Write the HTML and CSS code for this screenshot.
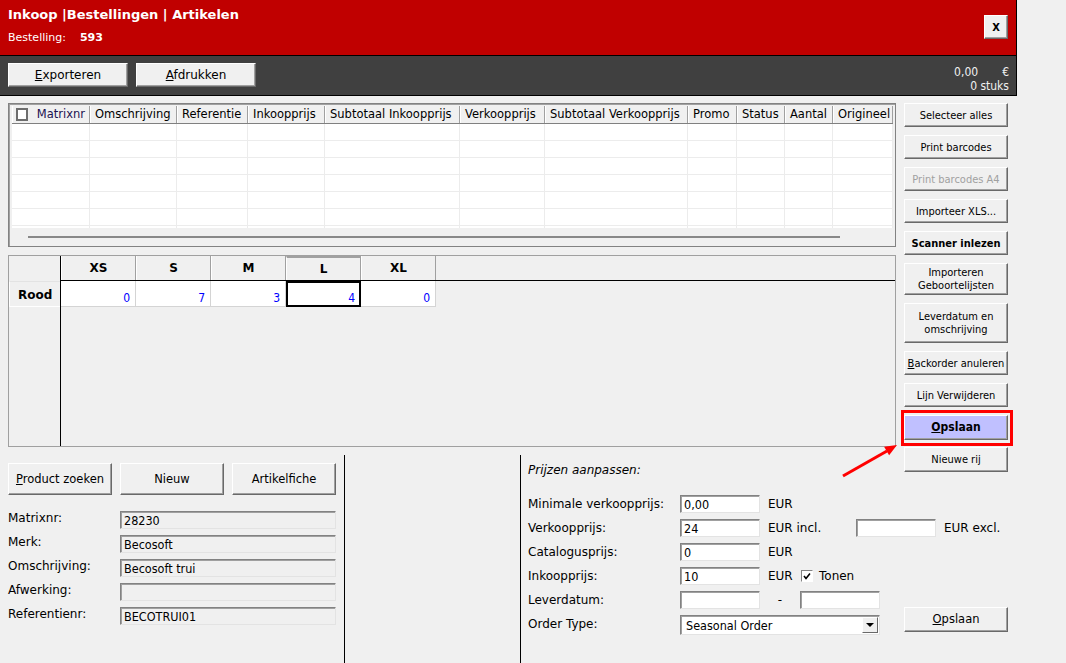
FILE: index.html
```html
<!DOCTYPE html>
<html lang="nl">
<head>
    <meta charset="UTF-8">
    <title>Inkoop | Bestellingen | Artikelen</title>
    <link rel="stylesheet" href="styles.css">
</head>
<body>
    <div class="top">
        <header class="titlebar">
            <div>
                <div class="title">Inkoop |Bestellingen | Artikelen</div>
                <div class="order">Bestelling:<b>593</b></div>
            </div>
            <button class="btn close">X</button>
        </header>
        <div class="toolbar">
            <button class="btn tb"><u>E</u>xporteren</button>
            <button class="btn tb"><u>A</u>fdrukken</button>
            <div class="totals">
                <div><span class="amount">0,00</span>€</div>
                <div>0 stuks</div>
            </div>
        </div>
    </div>

    <div class="content">
        <!-- article list -->
        <div class="grid">
            <div class="ghead">
                <div class="gc" style="width:78px"><span class="chk"></span>Matrixnr</div>
                <div class="gc" style="width:87px">Omschrijving</div>
                <div class="gc" style="width:71px">Referentie</div>
                <div class="gc" style="width:77px">Inkoopprijs</div>
                <div class="gc" style="width:135px">Subtotaal Inkoopprijs</div>
                <div class="gc" style="width:85px">Verkoopprijs</div>
                <div class="gc" style="width:143px">Subtotaal Verkoopprijs</div>
                <div class="gc" style="width:49px">Promo</div>
                <div class="gc" style="width:48px">Status</div>
                <div class="gc" style="width:48px">Aantal</div>
                <div class="gc" style="width:60px">Origineel</div>
            </div>
            <div class="gbody" id="gbody"></div>
            <div class="gscroll"><div class="bar"></div></div>
        </div>

        <div class="side">
            <button class="btn sb">Selecteer alles</button>
            <button class="btn sb">Print barcodes</button>
            <button class="btn sb disabled">Print barcodes A4</button>
            <button class="btn sb">Importeer XLS...</button>
            <button class="btn sb bold">Scanner inlezen</button>
            <button class="btn sb h32">Importeren<br>Geboortelijsten</button>
            <button class="btn sb h40">Leverdatum en<br>omschrijving</button>
            <button class="btn sb"><u>B</u>ackorder anuleren</button>
            <button class="btn sb">Lijn Verwijderen</button>
            <div class="highlight"><button class="btn sb save"><u>O</u>pslaan</button></div>
            <button class="btn sb h25">Nieuwe rij</button>
        </div>

        <!-- size matrix -->
        <div class="sizes">
            <div class="rowhead">
                <div class="corner"></div>
                <div class="rowlabel">Rood</div>
            </div>
            <div class="sbody">
                <div class="shead">
                    <div class="sh">XS</div>
                    <div class="sh">S</div>
                    <div class="sh">M</div>
                    <div class="sh cur">L</div>
                    <div class="sh">XL</div>
                </div>
                <div class="srow">
                    <div class="sc">0</div>
                    <div class="sc">7</div>
                    <div class="sc">3</div>
                    <div class="sc sel">4</div>
                    <div class="sc">0</div>
                </div>
            </div>
        </div>

        <div class="bottom">
            <div class="fields">
                <div class="btnrow">
                    <button class="btn big"><u>P</u>roduct zoeken</button>
                    <button class="btn big">Nieuw</button>
                    <button class="btn big">Artikelfiche</button>
                </div>
                <div class="flist">
                    <div class="frow"><label>Matrixnr:</label><div class="inp ro">28230</div></div>
                    <div class="frow"><label>Merk:</label><div class="inp ro">Becosoft</div></div>
                    <div class="frow"><label>Omschrijving:</label><div class="inp ro">Becosoft trui</div></div>
                    <div class="frow"><label>Afwerking:</label><div class="inp ro"></div></div>
                    <div class="frow"><label>Referentienr:</label><div class="inp ro">BECOTRUI01</div></div>
                </div>
            </div>
            <div class="vline"></div>
            <div class="vline far"></div>
            <div class="pricing">
                <div class="ptitle">Prijzen aanpassen:</div>
                <div class="plist">
                    <div class="prow"><label>Minimale verkoopprijs:</label><div class="inp">0,00</div><span class="unit">EUR</span></div>
                    <div class="prow"><label>Verkoopprijs:</label><div class="inp">24</div><span class="unit wide">EUR incl.</span><div class="inp"></div><span class="unit">EUR excl.</span></div>
                    <div class="prow"><label>Catalogusprijs:</label><div class="inp">0</div><span class="unit">EUR</span></div>
                    <div class="prow"><label>Inkoopprijs:</label><div class="inp">10</div><span class="unit narrow">EUR</span>
                        <span class="cb"><svg width="8" height="8" viewBox="0 0 8 8"><polyline points="1,4 3,6.5 7,1.5" fill="none" stroke="#000" stroke-width="1.6"/></svg></span><span class="cbl">Tonen</span></div>
                    <div class="pgroup">
                        <div class="plist">
                            <div class="prow"><label>Leverdatum:</label><div class="inp"></div><span class="dash">-</span><div class="inp"></div></div>
                            <div class="prow"><label>Order Type:</label>
                                <div class="select"><span>Seasonal Order</span><span class="dd"><i></i></span></div>
                            </div>
                        </div>
                        <button class="btn save2"><u>O</u>pslaan</button>
                    </div>
                </div>
            </div>
        </div>
    </div>

    <svg class="arrow" width="1066" height="663" viewBox="0 0 1066 663">
        <line x1="843" y1="476" x2="887" y2="451" stroke="#ff0000" stroke-width="3"/>
        <polygon points="897,445 889.1,455.3 884.1,446.7" fill="#ff0000"/>
    </svg>

    <script>
        // empty rows of the article list
        const widths = [78, 87, 71, 77, 135, 85, 143, 49, 48, 48, 60];
        const body = document.getElementById('gbody');
        for (let r = 0; r < 7; r++) {
            const row = document.createElement('div');
            row.className = 'grow';
            widths.forEach(function(w) {
                const cell = document.createElement('div');
                cell.className = 'gcell';
                cell.style.width = w + 'px';
                row.appendChild(cell);
            });
            body.appendChild(row);
        }
    </script>
</body>
</html>
```

FILE: styles.css
```css
* {
    box-sizing: border-box;
}

body {
    margin: 0;
    width: 1066px;
    height: 663px;
    overflow: hidden;
    position: relative;
    background: #f0f0f0;
    color: #000;
    font-family: "DejaVu Sans", sans-serif;
    font-size: 12px;
}

button {
    font-family: "DejaVu Sans Condensed", "DejaVu Sans", sans-serif;
    font-size: 11px;
    color: #000;
}

.btn {
    background: #f0f0f0;
    border: 1px solid;
    border-color: #fff #696969 #696969 #fff;
    box-shadow: inset -1px -1px 0 #a0a0a0;
    padding: 0;
    line-height: 13px;
}

/* header */
.top {
    width: 1017px;
    border-right: 1px solid #000;
}

.titlebar {
    height: 56px;
    background: #c00000;
    border-bottom: 1px solid #000;
    display: flex;
    justify-content: space-between;
    align-items: flex-start;
    padding: 6px 8px 0 8px;
    color: #fff;
}

.title {
    font-size: 13px;
    font-weight: bold;
    line-height: 18px;
}

.order {
    margin-top: 6px;
    font-size: 11px;
    line-height: 16px;
}

.order b {
    margin-left: 14px;
}

.close {
    width: 24px;
    height: 24px;
    margin-top: 9px;
    font-weight: bold;
}

.toolbar {
    height: 40px;
    background: #404040;
    border-bottom: 1px solid #000;
    display: flex;
    gap: 8px;
    padding: 7px 7px 0 8px;
}

.tb {
    width: 120px;
    height: 24px;
    font-family: "DejaVu Sans", sans-serif;
    font-size: 12px;
}

.totals {
    margin-left: auto;
    margin-top: 2px;
    text-align: right;
    color: #f0f0f0;
    font-family: "DejaVu Sans Condensed", sans-serif;
    font-size: 12px;
    line-height: 14px;
}

.amount {
    margin-right: 24px;
}

/* content */
.content {
    display: grid;
    grid-template-columns: 888px 104px;
    grid-template-rows: 144px 192px 208px;
    column-gap: 8px;
    row-gap: 8px;
    padding: 7px 0 0 8px;
}

.grid {
    border: 1px solid #828282;
    box-shadow: inset 1px 1px 0 #a0a0a0;
    padding: 2px 2px 0 3px;
    overflow: hidden;
}

.ghead {
    display: flex;
    height: 18px;
    border-bottom: 1px solid #808080;
    font-size: 11.5px;
}

.gc {
    flex: none;
    border-left: 1px solid #fff;
    border-right: 1px solid #a0a0a0;
    padding: 0 4px;
    line-height: 17px;
    white-space: nowrap;
    overflow: hidden;
    display: flex;
    align-items: center;
}

.gc:first-child {
    padding-left: 3px;
    color: #1c1250;
}

.chk {
    width: 13px;
    height: 13px;
    border: 2px solid #6d6d6d;
    background: #fff;
    margin-right: 9px;
}

.gbody {
    height: 104px;
    overflow: hidden;
    background: #fff;
    width: 881px;
}

.grow {
    display: flex;
    height: 17px;
    border-bottom: 1px solid #ececec;
}

.gcell {
    flex: none;
    height: 16px;
    border-right: 1px solid #ececec;
}

.gscroll {
    height: 17px;
    padding-top: 8px;
}

.bar {
    margin-left: 16px;
    width: 812px;
    height: 2px;
    background: #888;
}

/* side buttons */
.side {
    grid-column: 2;
    grid-row: 1 / 3;
    display: flex;
    flex-direction: column;
    gap: 8px;
    align-self: start;
    margin-right: -8px;
    padding-right: 8px;
}

.sb {
    height: 24px;
    width: 104px;
}

.sb.h25 { height: 25px; }
.sb.h32 { height: 32px; }
.sb.h40 { height: 40px; }

.sb.bold {
    font-weight: bold;
}

.sb.disabled {
    color: #a0a0a0;
}

.highlight {
    border: 3px solid #ff0000;
    margin: -5px -5px -7px -3px;
    padding: 2px 2px 3px 0;
}

.save {
    height: 25px;
    background: #c0c0ff;
    font-weight: bold;
    font-size: 12px;
}

/* size matrix */
.sizes {
    grid-column: 1;
    grid-row: 2;
    display: flex;
    border: 1px solid #a0a0a0;
}

.rowhead {
    width: 52px;
    border-right: 1px solid #000;
}

.corner {
    height: 25px;
}

.rowlabel {
    height: 26px;
    border-left: 1px solid #fff;
    border-bottom: 1px solid #fff;
    border-top: 1px solid #e3e3e3;
    font-weight: bold;
    font-size: 12px;
    line-height: 26px;
    padding-left: 8px;
}

.sbody {
    flex: 1;
}

.shead {
    display: flex;
    height: 25px;
    border-bottom: 1px solid #000;
}

.sh {
    width: 75px;
    border-left: 1px solid #fff;
    border-right: 1px solid #a0a0a0;
    text-align: center;
    font-weight: bold;
    font-size: 12px;
    line-height: 24px;
}

.sh.cur {
    border-top: 2px solid #a0a0a0;
    line-height: 22px;
}

.srow {
    display: flex;
}

.sc {
    width: 75px;
    height: 26px;
    background: #fff;
    border-right: 1px solid #d4d4d4;
    border-bottom: 1px solid #d4d4d4;
    color: #0000ff;
    text-align: right;
    font-family: "DejaVu Sans Condensed", sans-serif;
    font-size: 12px;
    padding: 10px 5px 0 0;
    line-height: 14px;
}

.sc.sel {
    border: 2px solid #000;
    padding: 8px 4px 0 0;
}

/* bottom part */
.bottom {
    grid-column: 1 / 3;
    grid-row: 3;
    display: flex;
}

.fields {
    width: 328px;
    padding-top: 8px;
}

.btnrow {
    display: flex;
    gap: 8px;
}

.big {
    width: 104px;
    height: 32px;
    font-family: "DejaVu Sans", sans-serif;
    font-size: 11.5px;
}

.flist {
    margin-top: 16px;
    display: flex;
    flex-direction: column;
    gap: 6px;
}

.frow {
    display: flex;
    height: 18px;
}

.frow label {
    width: 112px;
    line-height: 14px;
}

.inp {
    width: 80px;
    height: 18px;
    background: #fff;
    border: 1px solid;
    border-color: #828282 #e3e3e3 #e3e3e3 #828282;
    box-shadow: inset 1px 1px 0 #a0a0a0;
    padding: 2px 0 0 3px;
    font-family: "DejaVu Sans Condensed", sans-serif;
    font-size: 12.5px;
    line-height: 14px;
}

.inp.ro {
    width: 216px;
    background: #f0f0f0;
}

.vline {
    width: 1px;
    background: #000;
    margin-left: 8px;
}

.vline.far {
    margin-left: 175px;
}

.pricing {
    padding: 8px 0 0 7px;
    flex: 1;
}

.ptitle {
    font-style: italic;
    line-height: 14px;
    margin-bottom: 18px;
}

.plist {
    display: flex;
    flex-direction: column;
    gap: 6px;
}

.prow {
    display: flex;
    align-items: center;
    height: 18px;
}

.prow label {
    width: 152px;
}

.unit {
    margin-left: 8px;
}

.unit.wide {
    width: 88px;
}

.unit.narrow {
    width: 33px;
}

.cb {
    width: 12px;
    height: 12px;
    border: 1px solid;
    border-color: #828282 #fff #fff #828282;
    background: #fff;
    display: flex;
    align-items: center;
    justify-content: center;
}

.cbl {
    margin-left: 6px;
}

.dash {
    width: 40px;
    text-align: center;
}

.select {
    width: 200px;
    height: 20px;
    margin-top: 2px;
    background: #fff;
    border: 1px solid;
    border-color: #828282 #e3e3e3 #e3e3e3 #828282;
    box-shadow: inset 1px 1px 0 #a0a0a0;
    display: flex;
    justify-content: space-between;
    align-items: center;
    padding: 1px 1px 1px 5px;
    font-family: "DejaVu Sans Condensed", sans-serif;
    font-size: 12.5px;
}

.dd {
    width: 16px;
    height: 16px;
    background: #f0f0f0;
    border: 1px solid;
    border-color: #fff #696969 #696969 #fff;
    display: flex;
    align-items: center;
    justify-content: center;
}

.dd i {
    border-left: 4px solid transparent;
    border-right: 4px solid transparent;
    border-top: 4px solid #000;
}

.pgroup {
    display: flex;
}

.save2 {
    width: 104px;
    height: 25px;
    margin: 16px 0 0 24px;
    font-family: "DejaVu Sans", sans-serif;
    font-size: 11.5px;
}

.arrow {
    position: absolute;
    left: 0;
    top: 0;
    pointer-events: none;
}
```
